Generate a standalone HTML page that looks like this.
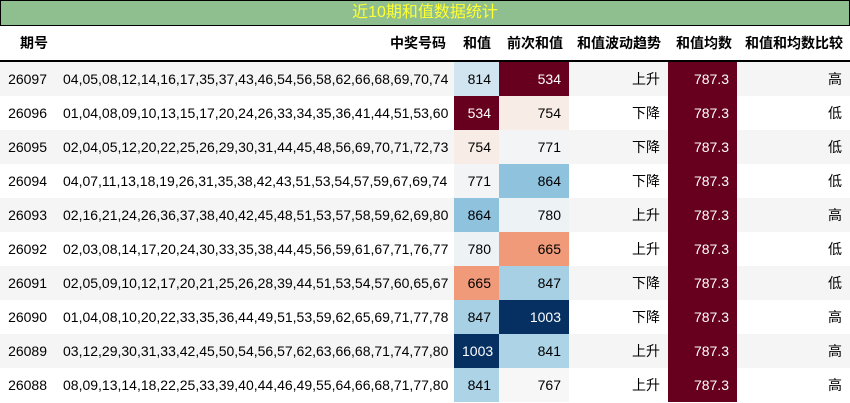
<!DOCTYPE html><html><head><meta charset="utf-8"><style>
body{margin:0;width:850px;height:403px;background:#fff;font-family:"Liberation Sans","Noto Sans CJK SC",sans-serif;font-size:14px;color:#000;overflow:hidden}
.t{position:absolute;left:0;top:0;width:848px;height:24px;background:#8fbf8f;border:1px solid #000;text-align:center;color:#ffff33;font-size:16px;line-height:24px}
table{position:absolute;left:0;top:26px;border-collapse:collapse;width:850px;table-layout:fixed}
th{font-weight:bold;height:34px;text-align:right;padding:0 8px;border-bottom:2px solid #000;white-space:nowrap}
td{height:34px;padding:0 8px;text-align:right;white-space:nowrap}
tr.g td{background:#f5f5f5}
.avg{background:#67001f!important;color:#fff}
</style></head><body>
<div class="t">近10期和值数据统计</div>
<table>
<colgroup><col style="width:55px"><col style="width:399px"><col style="width:45px"><col style="width:70px"><col style="width:99px"><col style="width:69px"><col style="width:113px"></colgroup>
<tr><th style="text-align:left;padding-left:20px;padding-right:0">期号</th><th>中奖号码</th><th>和值</th><th>前次和值</th><th>和值波动趋势</th><th>和值均数</th><th>和值和均数比较</th></tr>
<tr class="g"><td>26097</td><td>04,05,08,12,14,16,17,35,37,43,46,54,56,58,62,66,68,69,70,74</td><td style="background:#d1e5f0!important">814</td><td class="avg">534</td><td>上升</td><td class="avg">787.3</td><td>高</td></tr>
<tr><td>26096</td><td>01,04,08,09,10,13,15,17,20,24,26,33,34,35,36,41,44,51,53,60</td><td class="avg">534</td><td style="background:#f8ede6">754</td><td>下降</td><td class="avg">787.3</td><td>低</td></tr>
<tr class="g"><td>26095</td><td>02,04,05,12,20,22,25,26,29,30,31,44,45,48,56,69,70,71,72,73</td><td style="background:#f8ede6!important">754</td><td style="background:#f2f4f6!important">771</td><td>下降</td><td class="avg">787.3</td><td>低</td></tr>
<tr><td>26094</td><td>04,07,11,13,18,19,26,31,35,38,42,43,51,53,54,57,59,67,69,74</td><td style="background:#f2f4f6">771</td><td style="background:#8fc2dd">864</td><td>下降</td><td class="avg">787.3</td><td>低</td></tr>
<tr class="g"><td>26093</td><td>02,16,21,24,26,36,37,38,40,42,45,48,51,53,57,58,59,62,69,80</td><td style="background:#8fc2dd!important">864</td><td style="background:#edf2f5!important">780</td><td>上升</td><td class="avg">787.3</td><td>高</td></tr>
<tr><td>26092</td><td>02,03,08,14,17,20,24,30,33,35,38,44,45,56,59,61,67,71,76,77</td><td style="background:#edf2f5">780</td><td style="background:#f09a7a">665</td><td>上升</td><td class="avg">787.3</td><td>低</td></tr>
<tr class="g"><td>26091</td><td>02,05,09,10,12,17,20,21,25,26,28,39,44,51,53,54,57,60,65,67</td><td style="background:#f09a7a!important">665</td><td style="background:#a7d0e4!important">847</td><td>下降</td><td class="avg">787.3</td><td>低</td></tr>
<tr><td>26090</td><td>01,04,08,10,20,22,33,35,36,44,49,51,53,59,62,65,69,71,77,78</td><td style="background:#a7d0e4">847</td><td style="background:#053061;color:#fff">1003</td><td>下降</td><td class="avg">787.3</td><td>高</td></tr>
<tr class="g"><td>26089</td><td>03,12,29,30,31,33,42,45,50,54,56,57,62,63,66,68,71,74,77,80</td><td style="background:#053061!important;color:#fff">1003</td><td style="background:#add3e6!important">841</td><td>上升</td><td class="avg">787.3</td><td>高</td></tr>
<tr><td>26088</td><td>08,09,13,14,18,22,25,33,39,40,44,46,49,55,64,66,68,71,77,80</td><td style="background:#add3e6">841</td><td style="background:#f7f7f7">767</td><td>上升</td><td class="avg">787.3</td><td>高</td></tr>
</table>
</body></html>
